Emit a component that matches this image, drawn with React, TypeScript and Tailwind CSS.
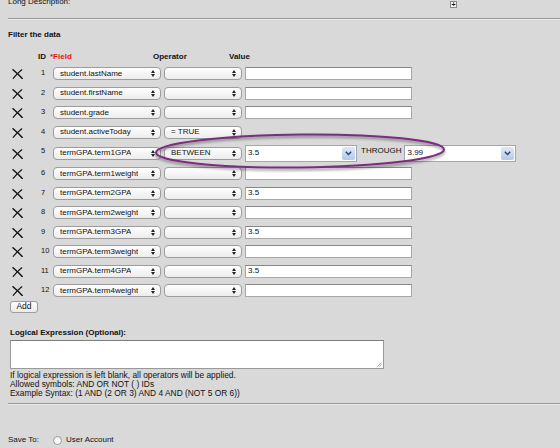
import React from 'react'

const font = { fontFamily: '"Liberation Sans", Arial, sans-serif' }

type Row = { id: number; field: string; op?: string; value?: string | null }

const rows: Row[] = [
  { id: 1, field: 'student.lastName', value: '' },
  { id: 2, field: 'student.firstName', value: '' },
  { id: 3, field: 'student.grade', value: '' },
  { id: 4, field: 'student.activeToday', op: '= TRUE', value: null },
  { id: 5, field: 'termGPA.term1GPA', op: 'BETWEEN' },
  { id: 6, field: 'termGPA.term1weight', value: '' },
  { id: 7, field: 'termGPA.term2GPA', value: '3.5' },
  { id: 8, field: 'termGPA.term2weight', value: '' },
  { id: 9, field: 'termGPA.term3GPA', value: '3.5' },
  { id: 10, field: 'termGPA.term3weight', value: '' },
  { id: 11, field: 'termGPA.term4GPA', value: '3.5' },
  { id: 12, field: 'termGPA.term4weight', value: '' },
]

function Arrows() {
  return (
    <svg width="4" height="7" viewBox="0 0 4 7" className="shrink-0">
      <path d="M0 3 L2 0 L4 3 Z M0 4 L2 7 L4 4 Z" fill="#222" />
    </svg>
  )
}

function Select({ text, w }: { text?: string; w: string }) {
  return (
    <div
      className={`${w} flex h-[13px] shrink-0 items-center justify-between rounded-[4px] border border-[#9c9c9c] bg-gradient-to-b from-white to-[#ececec] pl-[6px] pr-[5px] text-[8px] leading-none text-[#111]`}
    >
      <span className="truncate">{text}</span>
      <Arrows />
    </div>
  )
}

function TextBox({ value, w }: { value?: string; w: string }) {
  return (
    <div
      className={`${w} flex h-[13px] shrink-0 items-center border border-[#a8a8a8] border-t-[#888] bg-white pl-[2px] text-[8px] leading-none text-[#111]`}
    >
      {value}
    </div>
  )
}

function Combo({ value, w }: { value: string; w: string }) {
  return (
    <div
      className={`${w} flex h-[17px] shrink-0 items-center justify-between border border-[#9aa7bd] bg-white pl-[2px] pr-[1px] text-[8px] leading-none text-[#111]`}
    >
      <span>{value}</span>
      <div className="flex h-[13px] w-[13px] items-center justify-center rounded-[2px] bg-gradient-to-b from-[#dfe8f7] to-[#b5c8ea]">
        <svg width="7" height="5" viewBox="0 0 7 5">
          <path d="M0.8 0.8 L3.5 3.6 L6.2 0.8" fill="none" stroke="#2c3f6b" strokeWidth="1.4" />
        </svg>
      </div>
    </div>
  )
}

function DeleteX() {
  return (
    <svg width="11" height="10" viewBox="0 0 11 10">
      <path d="M1 0.8 C3 2.5 7 6 10.2 9.4" fill="none" stroke="#111" strokeWidth="1.5" strokeLinecap="round" />
      <path d="M9.8 0.8 C7 3 4 6.2 1.2 9.3" fill="none" stroke="#111" strokeWidth="1.15" strokeLinecap="round" />
    </svg>
  )
}

export default function App() {
  return (
    <div className="relative h-[448px] w-[560px] overflow-hidden bg-[#d9d9d9] text-[8px] text-[#111]" style={font}>
      {/* Long description (cut off) */}
      <div className="flex h-[8px] items-center justify-between pl-[8px] pr-[103px]">
        <span className="-mt-[5px] leading-none">Long Description:</span>
        <div className="flex h-[7px] w-[7px] items-center justify-center border border-[#888] bg-[#f4f4f4] text-[7px] font-bold leading-none">
          +
        </div>
      </div>

      <div className="ml-[8px] mt-[10px] border-t border-b border-t-[#9a9a9a] border-b-[#ececec]" />

      <div className="px-[8px]">
        <div className="mt-[11px] font-bold leading-none">Filter the data</div>

        {/* header */}
        <div className="mt-[12px] flex h-[12px] items-center font-bold leading-none">
          <span className="w-[30px]" />
          <span className="w-[12px]">ID</span>
          <span className="w-[103px] text-[#e8140f]">*Field</span>
          <span className="w-[76px]">Operator</span>
          <span>Value</span>
        </div>

        {/* rows */}
        <div className="mt-[1px]">
          {rows.map((r) => (
            <div key={r.id} className={`flex items-center ${r.id === 5 ? 'h-[22px]' : 'h-[19.5px]'}`}>
              <div className="flex w-[28px] shrink-0 items-center pl-[4px] pt-[1px]">
                <DeleteX />
              </div>
              <div className="w-[17px] shrink-0 self-start pt-[5px] pl-[5px] text-[7.5px] leading-none">{r.id}</div>
              <Select text={r.field} w="w-[108px]" />
              <div className="w-[3px]" />
              <Select text={r.op} w="w-[78px]" />
              <div className="w-[3px]" />
              {r.id === 5 ? (
                <>
                  <Combo value="3.5" w="w-[112px]" />
                  <span className="ml-[4px] mr-[3px] -mt-[4px] leading-none">THROUGH</span>
                  <Combo value="3.99" w="w-[112px]" />
                </>
              ) : r.value !== null ? (
                <TextBox value={r.value} w="w-[167px]" />
              ) : null}
            </div>
          ))}
        </div>

        <button className="ml-[2px] mt-0 flex h-[12px] w-[28px] items-center justify-center rounded-[3px] border border-[#9c9c9c] bg-gradient-to-b from-white to-[#e9e9e9] text-[8.5px] leading-none">
          Add
        </button>

        <div className="ml-[2px] mt-[16px] font-bold leading-none">Logical Expression (Optional):</div>
        <div className="relative ml-[2px] mt-[3px] h-[29px] w-[374px] border border-[#999] border-t-[#7c7c7c] bg-white">
          <svg width="5" height="5" viewBox="0 0 5 5" className="absolute bottom-[1px] right-[1px]">
            <path d="M0.5 4.5 L4.5 0.5 M2.5 4.5 L4.5 2.5" stroke="#888" strokeWidth="0.8" />
          </svg>
        </div>
        <div className="ml-[2px] mt-[2px] text-[8.4px] leading-[9px]">
          <div>If logical expression is left blank, all operators will be applied.</div>
          <div>Allowed symbols: AND OR NOT ( ) IDs</div>
          <div>Example Syntax: (1 AND (2 OR 3) AND 4 AND (NOT 5 OR 6))</div>
        </div>
      </div>

      <div className="ml-[8px] mt-[5px] border-t border-b border-t-[#9a9a9a] border-b-[#ececec]" />

      <div className="mt-[31px] flex items-center pl-[8px] leading-none">
        <span className="w-[45px]">Save To:</span>
        <span className="h-[9px] w-[9px] rounded-full border border-[#9a9a9a] bg-gradient-to-b from-[#f2f2f2] to-white" />
        <span className="ml-[4px]">User Account</span>
      </div>

      {/* highlight annotation */}
      <svg
        width="310"
        height="48"
        viewBox="0 0 310 48"
        className="pointer-events-none absolute left-[145px] top-[127px]"
      >
        <ellipse cx="155" cy="26" rx="144" ry="16.5" fill="none" stroke="#000" strokeOpacity="0.3" strokeWidth="3" transform="rotate(-0.6 155 25)" style={{ filter: 'blur(1.2px)' }} />
        <ellipse cx="155" cy="24" rx="144" ry="16.5" fill="none" stroke="#7d2c82" strokeWidth="2" transform="rotate(-0.6 155 24)" />
      </svg>
    </div>
  )
}
